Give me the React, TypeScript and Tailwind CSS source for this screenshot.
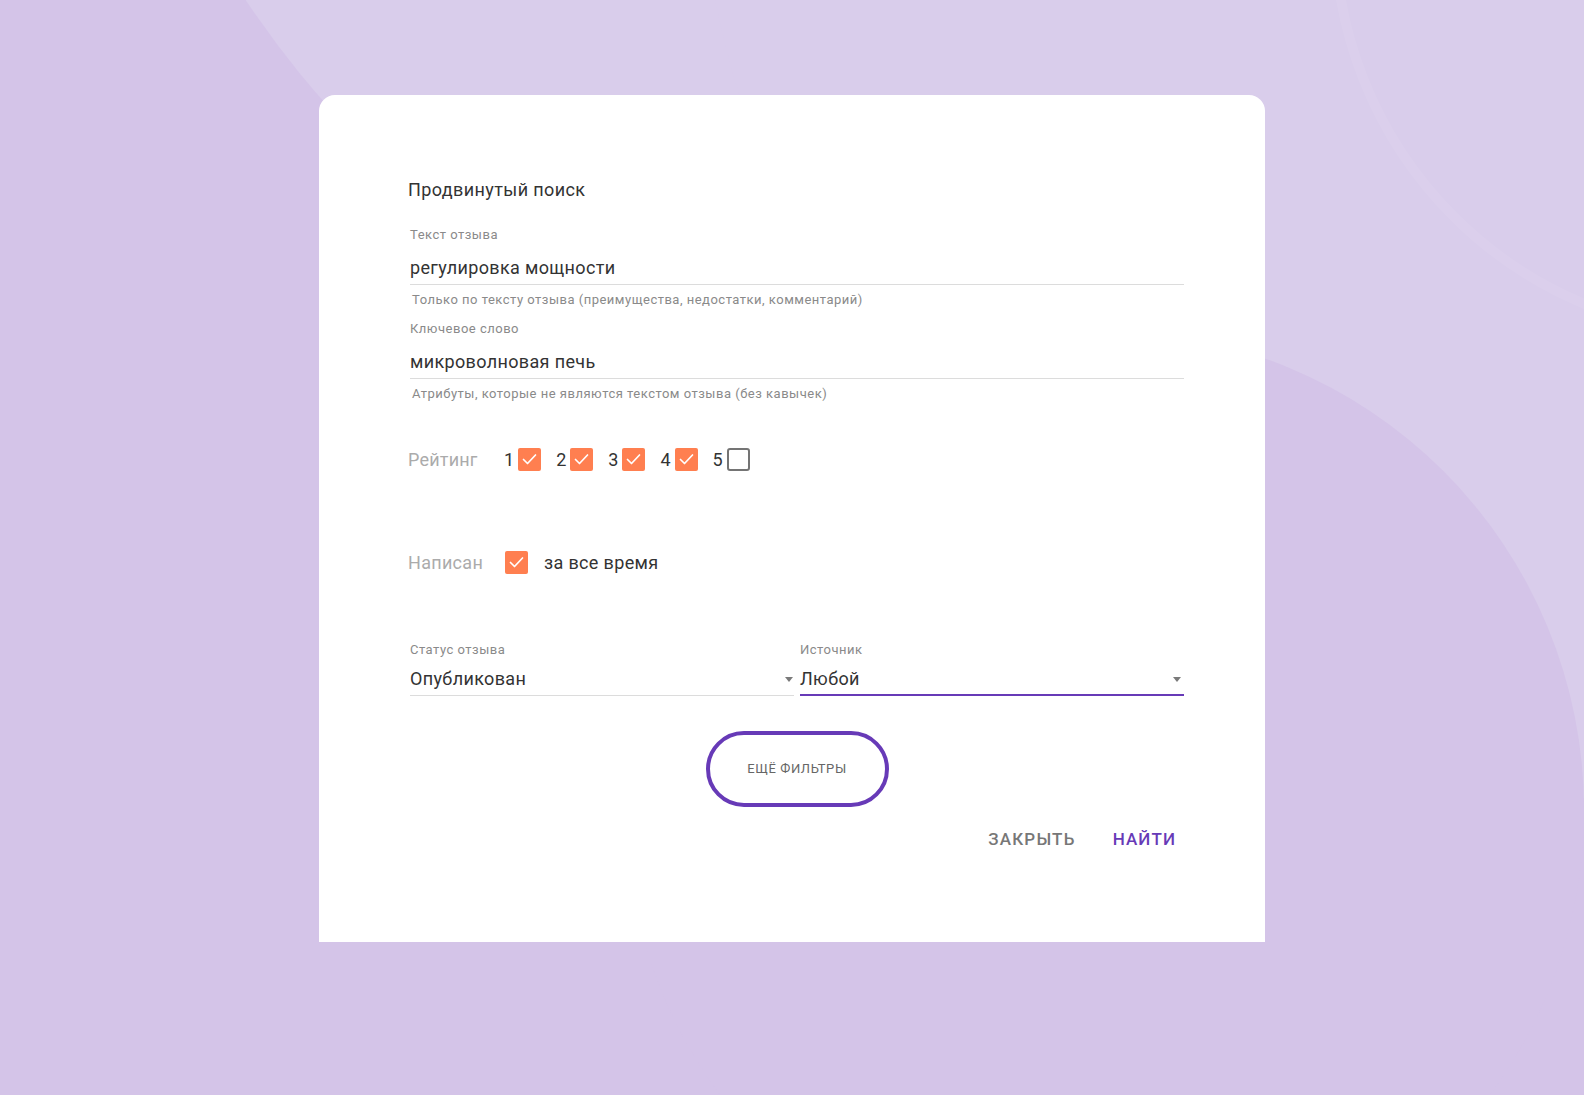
import React from 'react';

const Check: React.FC<{ checked?: boolean }> = ({ checked = true }) => {
  if (!checked) {
    return <span className="block w-[23px] h-[23px] rounded-[3px] border-2 border-[#747474] bg-white" />;
  }
  return (
    <span className="flex w-[23px] h-[23px] items-center justify-center rounded-[2px] bg-[#ff7f50]">
      <svg width="23" height="23" viewBox="0 0 23 23" fill="none">
        <path d="M5.5 11.5l4 4 8-8.5" stroke="#fff" strokeWidth="1.7" strokeLinecap="round" strokeLinejoin="round" />
      </svg>
    </span>
  );
};

const Field: React.FC<{ label: string; value: string; hint: string; className?: string }> = ({ label, value, hint, className }) => (
  <div className={className}>
    <div className="text-[13px] leading-4 tracking-[0.5px] text-[#8a8a8a]">{label}</div>
    <div className="mt-[14px] border-b border-[#dcdcdc] pb-[5px] text-[18px] leading-[22px] tracking-[0.35px] text-[#333]">{value}</div>
    <div className="mt-[7px] pl-[2px] text-[13px] leading-4 tracking-[0.5px] text-[#8a8a8a]">{hint}</div>
  </div>
);

const Caret = () => (
  <span className="block w-0 h-0 border-l-[4px] border-r-[4px] border-t-[5px] border-l-transparent border-r-transparent border-t-[#7a7a7a]" />
);

const App: React.FC = () => {
  return (
    <div className="relative h-[1095px] overflow-hidden bg-[#d4c4e8] font-['Roboto',_sans-serif]">
      {/* background blobs */}
      <div className="absolute left-[95px] top-[-1405px] w-[1810px] h-[1810px] rounded-full bg-[#d9cdeb]" />
      <div className="absolute left-[695px] top-[-1205px] w-[2010px] h-[2010px] rounded-full bg-[#d9cdeb]" />
      <div className="absolute left-[1330px] top-[-480px] w-[820px] h-[820px] rounded-full border-[10px] border-white/[0.06]" />
      <div className="absolute left-[626px] top-[331px] w-[958px] h-[958px] rounded-full bg-[#d4c4e8]" />

      <div className="relative ml-[319px] pt-[95px]">
        <div className="w-[946px] h-[847px] rounded-t-[16px] bg-white pt-[85px] pl-[91px] pr-[81px]">
          <h2 className="-ml-[2px] text-[18px] leading-5 tracking-[0.4px] text-[#333]">Продвинутый поиск</h2>

          <Field
            className="mt-[27px]"
            label="Текст отзыва"
            value="регулировка мощности"
            hint="Только по тексту отзыва (преимущества, недостатки, комментарий)"
          />
          <Field
            className="mt-[13px]"
            label="Ключевое слово"
            value="микроволновая печь"
            hint="Атрибуты, которые не являются текстом отзыва (без кавычек)"
          />

          {/* rating */}
          <div className="mt-[46px] -ml-[2px] flex items-center">
            <span className="w-[96px] text-[18px] leading-[22px] tracking-[0.2px] text-[#ababab]">Рейтинг</span>
            <div className="flex items-center gap-[15px]">
              {[1, 2, 3, 4, 5].map((n) => (
                <div key={n} className="flex items-center gap-[4px]">
                  <span className="text-[18px] leading-[22px] text-[#333]">{n}</span>
                  <Check checked={n !== 5} />
                </div>
              ))}
            </div>
          </div>

          {/* written */}
          <div className="mt-[80px] -ml-[2px] flex items-center">
            <span className="w-[97px] text-[18px] leading-[22px] tracking-[0.3px] text-[#ababab]">Написан</span>
            <Check />
            <span className="ml-[16px] text-[18px] leading-[22px] tracking-[0.35px] text-[#333]">за все время</span>
          </div>

          {/* selects */}
          <div className="mt-[68px] grid grid-cols-2 gap-[6px]">
            <div>
              <div className="text-[13px] leading-4 tracking-[0.5px] text-[#8a8a8a]">Статус отзыва</div>
              <div className="mt-[10px] flex items-center justify-between border-b border-[#dcdcdc] pb-[5px] text-[18px] leading-[22px] tracking-[0.35px] text-[#333]">
                <span>Опубликован</span>
                <span className="mr-[1px]"><Caret /></span>
              </div>
            </div>
            <div>
              <div className="text-[13px] leading-4 tracking-[0.5px] text-[#8a8a8a]">Источник</div>
              <div className="mt-[10px] flex items-center justify-between border-b-2 border-[#673ab7] pb-[4px] text-[18px] leading-[22px] tracking-[0.35px] text-[#333]">
                <span>Любой</span>
                <span className="mr-[3px]"><Caret /></span>
              </div>
            </div>
          </div>

          <div className="mt-[35px] flex justify-center">
            <button className="w-[183px] h-[76px] rounded-full border-4 border-[#673ab7] text-[13px] uppercase tracking-[0.6px] text-[#666]">
              Ещё фильтры
            </button>
          </div>

          <div className="mt-[22px] flex justify-end gap-[21px]">
            <button className="px-2 text-[17px] leading-5 font-medium uppercase tracking-[1.2px] text-[#777]">Закрыть</button>
            <button className="px-2 text-[17px] leading-5 font-medium uppercase tracking-[1.1px] text-[#673ab7]">Найти</button>
          </div>
        </div>
      </div>
    </div>
  );
};

export default App;
